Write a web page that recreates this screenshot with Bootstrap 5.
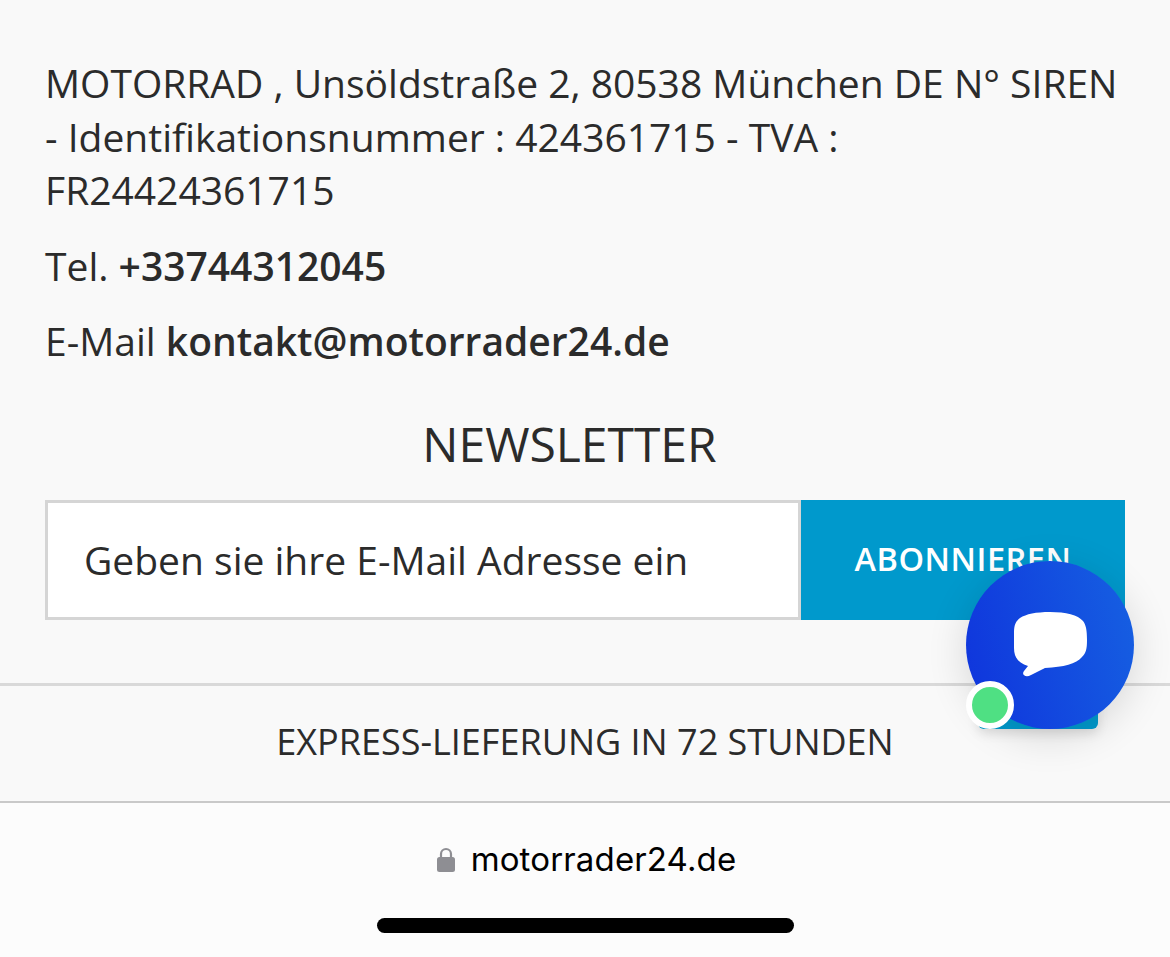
<!DOCTYPE html>
<html>
  <head>
    <title>Newsletter</title>
    <link
      rel="stylesheet"
      href="https://cdn.jsdelivr.net/npm/bootstrap@5.3.0/dist/css/bootstrap.min.css"
    />
    <style>
      html, body { height: 957px; overflow: hidden; }
      body { background: #f9f9f9; color: #2b2b2b; font-family: "Open Sans", sans-serif; position: relative; }
      .page-main { padding: 56px 45px 0 45px; height: 801px; }
      .info-text { font-size: 39px; line-height: 53.5px; margin-bottom: 22px; }
      .info-text b { font-weight: 600; }
      .news-title { font-size: 48px; line-height: 66px; margin: 43px 0 23px; text-align: center; font-weight: 400; padding-right: 31px; }
      .news-form { height: 120px; }
      .news-input { flex: 1 1 auto; min-width: 0; background: #fff; border: 3px solid #d5d5d5; border-radius: 0; font-size: 39px; padding: 2px 36px 0; color: #2b2b2b; }
      .news-input::placeholder { color: #2b2b2b; opacity: 1; }
      .news-btn { width: 324px; background: #0099cc; color: #fff; border: 0; border-radius: 0; font-size: 32.5px; font-weight: 600; letter-spacing: .5px; }
      .express-row { margin: 63px -45px 0 -45px; height: 118px; border-top: 3px solid #d9d9d9; font-size: 36px; line-height: 112px; text-align: center; }
      .browser-bar { height: 156px; background: #fcfcfc; border-top: 2px solid #c9c9c9; padding-top: 36px; }
      .url-text { font-family: Inter, sans-serif; font-size: 33px; line-height: 40px; color: #000; letter-spacing: .15px; padding-left: 3px; }
      .home-bar { width: 417px; height: 15px; background: #000; border-radius: 8px; margin: 39px auto 0; }
      .chat-under { position: absolute; left: 978px; top: 680px; width: 120px; height: 49px; background: #0099cc; border-radius: 0 0 6px 6px; box-shadow: 0 4px 12px rgba(0,0,0,.12); }
      .chat-btn { position: absolute; left: 966px; top: 561px; width: 168px; height: 168px; border-radius: 50%; background: linear-gradient(75deg, #0f33dc, #1661e2); box-shadow: 0 8px 40px rgba(0,0,0,.14); }
      .chat-dot { position: absolute; left: 966px; top: 681px; width: 48px; height: 48px; border-radius: 50%; background: #4fe083; border: 6px solid #fff; }
      .chat-icon { position: absolute; left: 1014px; top: 612px; }
    </style>
  </head>

  <body>
    <div class="page-main">
      <p class="info-text">MOTORRAD , Unsöldstraße 2, 80538 München DE N° SIREN - Identifikationsnummer : 424361715 - TVA : FR24424361715</p>
      <p class="info-text">Tel. <b>+33744312045</b></p>
      <p class="info-text">E-Mail <b>kontakt@motorrader24.de</b></p>
      <h2 class="news-title">NEWSLETTER</h2>
      <form class="news-form d-flex">
        <input class="news-input" type="text" placeholder="Geben sie ihre E-Mail Adresse ein" />
        <button type="button" class="news-btn">ABONNIEREN</button>
      </form>
      <div class="express-row">EXPRESS-LIEFERUNG IN 72 STUNDEN</div>
    </div>

    <div class="browser-bar">
      <div class="d-flex justify-content-center align-items-center gap-3 url-text">
        <svg width="18" height="25" viewBox="0 0 18 25">
          <path d="M4 11V7a5 5 0 0 1 10 0v4" fill="none" stroke="#8e8e93" stroke-width="2.2" />
          <rect x="0" y="10" width="18" height="15" rx="2.5" fill="#8e8e93" />
        </svg>
        <span>motorrader24.de</span>
      </div>
      <div class="home-bar"></div>
    </div>

    <div class="chat-under"></div>
    <div class="chat-btn"></div>
    <svg class="chat-icon" width="73" height="66" viewBox="0 0 73 66">
      <path d="M36 0C52 0 64 3 69 9C72 13 73 18 73 28C73 37 72 41 68 45C62 52 50 55 31 56L17 63C12 66 7 63 10 59L14 54C5 51 0 46 0 36V22C0 14 1 10 6 6C12 2 22 0 36 0Z" fill="#fff" />
    </svg>
    <div class="chat-dot"></div>

    <script src="https://cdn.jsdelivr.net/npm/bootstrap@5.3.0/dist/js/bootstrap.bundle.min.js"></script>
  </body>
</html>
